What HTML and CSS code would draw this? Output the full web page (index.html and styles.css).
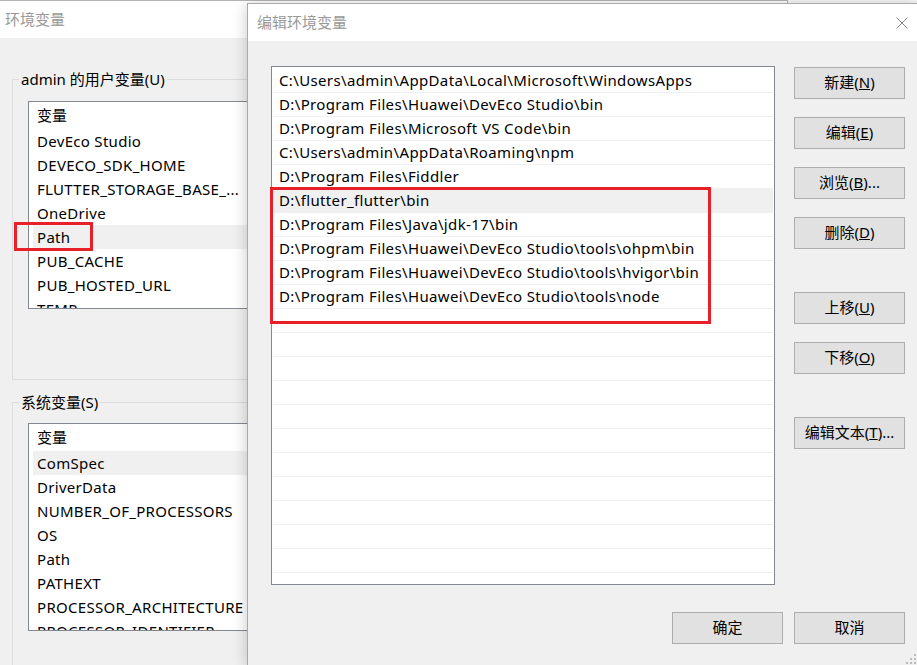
FILE: index.html
```html
<!DOCTYPE html>
<html lang="zh-CN">
<head>
    <meta charset="UTF-8">
    <title>编辑环境变量</title>
    <link rel="stylesheet" href="styles.css">
</head>
<body>

<div class="env-window">
    <div class="titlebar env-title">环境变量</div>
    <div class="env-body">
        <fieldset class="group user-group">
            <legend>admin 的用户变量(U)</legend>
            <div class="var-list">
                <div class="var-head">变量</div>
                <div class="var-row">DevEco Studio</div>
                <div class="var-row">DEVECO_SDK_HOME</div>
                <div class="var-row">FLUTTER_STORAGE_BASE_...</div>
                <div class="var-row">OneDrive</div>
                <div class="var-row sel">Path</div>
                <div class="var-row">PUB_CACHE</div>
                <div class="var-row">PUB_HOSTED_URL</div>
                <div class="var-row">TEMP</div>
            </div>
        </fieldset>
        <fieldset class="group sys-group">
            <legend>系统变量(S)</legend>
            <div class="var-list">
                <div class="var-head">变量</div>
                <div class="var-row sel">ComSpec</div>
                <div class="var-row">DriverData</div>
                <div class="var-row">NUMBER_OF_PROCESSORS</div>
                <div class="var-row">OS</div>
                <div class="var-row">Path</div>
                <div class="var-row">PATHEXT</div>
                <div class="var-row">PROCESSOR_ARCHITECTURE</div>
                <div class="var-row">PROCESSOR_IDENTIFIER</div>
            </div>
        </fieldset>
    </div>
</div>

<div class="mark mark-path"></div>

<div class="edit-dialog">
    <div class="titlebar dlg-title">
        <span>编辑环境变量</span>
        <svg class="close-x" width="12" height="12" viewBox="0 0 12 12">
            <path d="M0.5 0.5 L11.5 11.5 M11.5 0.5 L0.5 11.5" stroke="#888" stroke-width="1" fill="none"/>
        </svg>
    </div>
    <div class="dlg-body">
        <div class="dlg-main">
            <div class="path-list">
                <div class="path-row">C:\Users\admin\AppData\Local\Microsoft\WindowsApps</div>
                <div class="path-row">D:\Program Files\Huawei\DevEco Studio\bin</div>
                <div class="path-row">D:\Program Files\Microsoft VS Code\bin</div>
                <div class="path-row">C:\Users\admin\AppData\Roaming\npm</div>
                <div class="path-row">D:\Program Files\Fiddler</div>
                <div class="path-row sel">D:\flutter_flutter\bin</div>
                <div class="path-row">D:\Program Files\Java\jdk-17\bin</div>
                <div class="path-row">D:\Program Files\Huawei\DevEco Studio\tools\ohpm\bin</div>
                <div class="path-row">D:\Program Files\Huawei\DevEco Studio\tools\hvigor\bin</div>
                <div class="path-row">D:\Program Files\Huawei\DevEco Studio\tools\node</div>
                <div class="path-row"></div>
                <div class="path-row"></div>
                <div class="path-row"></div>
                <div class="path-row"></div>
                <div class="path-row"></div>
                <div class="path-row"></div>
                <div class="path-row"></div>
                <div class="path-row"></div>
                <div class="path-row"></div>
                <div class="path-row"></div>
                <div class="path-row"></div>
                <div class="path-row"></div>
            </div>
            <div class="side-buttons">
                <button class="btn">新建(<u>N</u>)</button>
                <button class="btn">编辑(<u>E</u>)</button>
                <button class="btn">浏览(<u>B</u>)...</button>
                <button class="btn">删除(<u>D</u>)</button>
                <button class="btn btn-sep">上移(<u>U</u>)</button>
                <button class="btn">下移(<u>O</u>)</button>
                <button class="btn btn-sep">编辑文本(<u>T</u>)...</button>
            </div>
        </div>
        <div class="dlg-footer">
            <button class="btn">确定</button>
            <button class="btn">取消</button>
        </div>
    </div>
    <div class="mark mark-paths"></div>
    <svg class="grip" width="10" height="10" viewBox="0 0 10 10">
        <rect x="8" y="0" width="2" height="2" fill="#bcbcbc"/>
        <rect x="4" y="4" width="2" height="2" fill="#bcbcbc"/>
        <rect x="8" y="4" width="2" height="2" fill="#bcbcbc"/>
        <rect x="0" y="8" width="2" height="2" fill="#bcbcbc"/>
        <rect x="4" y="8" width="2" height="2" fill="#bcbcbc"/>
        <rect x="8" y="8" width="2" height="2" fill="#bcbcbc"/>
    </svg>
</div>

</body>
</html>
```

FILE: styles.css
```css
body {
    margin: 0;
    width: 917px;
    height: 665px;
    overflow: hidden;
    position: relative;
    background-color: #f7f7f7;
    font-family: "Noto Sans", "Noto Sans CJK SC", sans-serif;
    font-size: 15px;
    color: #000;
}

/* background window */
.env-window {
    position: absolute;
    left: 0;
    top: 0;
    width: 788px;
    height: 665px;
    box-sizing: border-box;
    border-top: 1px solid #b4b4b4;
    border-right: 1px solid #b4b4b4;
    background-color: #f0f0f0;
    overflow: hidden;
}
.titlebar {
    background-color: #fff;
    color: #999;
    height: 37px;
    line-height: 37px;
}
.env-title {
    padding-left: 5px;
}
.env-body {
    padding: 0 12px;
}
.group {
    margin: 0;
    border: 1px solid #dcdcdc;
    padding: 12px 15px 70px;
    min-width: 0;
}
.group legend {
    margin-left: -9px;
    padding: 0 2px;
    line-height: 20px;
}
.user-group {
    margin-top: 31px;
}
.sys-group {
    margin-top: 12px;
    padding-top: 11px;
}
.var-list {
    height: 208px;
    box-sizing: border-box;
    border: 1px solid #828790;
    background-color: #fff;
    padding-left: 4px;
    overflow: hidden;
}
.var-head {
    height: 27px;
    line-height: 27px;
    padding-left: 4px;
}
.var-row {
    height: 24px;
    line-height: 24px;
    padding-left: 4px;
    white-space: nowrap;
    letter-spacing: 0.3px;
}
.var-row.sel {
    background-color: #f0f0f0;
}

/* red marks */
.mark {
    position: absolute;
    border: 3px solid #e8202a;
    box-sizing: border-box;
}
.mark-path {
    left: 14px;
    top: 222px;
    width: 79px;
    height: 29px;
}
.mark-paths {
    left: 22px;
    top: 183px;
    width: 441px;
    height: 137px;
}

/* edit dialog */
.edit-dialog {
    position: absolute;
    left: 247px;
    top: 3px;
    width: 671px;
    height: 662px;
    box-sizing: border-box;
    border: 1px solid #aaa;
    border-bottom: none;
    background-color: #f0f0f0;
    box-shadow: 0 2px 14px rgba(0, 0, 0, 0.22);
}
.dlg-title {
    display: flex;
    justify-content: space-between;
    align-items: center;
    padding: 0 9px;
}
.dlg-body {
    padding: 25px 0 0 23px;
}
.dlg-main {
    display: flex;
    align-items: flex-start;
}
.path-list {
    width: 504px;
    height: 519px;
    box-sizing: border-box;
    border: 1px solid #828790;
    background-color: #fff;
    padding: 2px 1px 0;
    overflow: hidden;
}
.path-row {
    height: 24px;
    box-sizing: border-box;
    line-height: 23px;
    padding-left: 6px;
    border-bottom: 1px solid #f0f0f0;
    white-space: nowrap;
    letter-spacing: 0.36px;
}
.path-row.sel {
    background-color: #f0f0f0;
}
.side-buttons {
    display: flex;
    flex-direction: column;
    gap: 18px;
    margin-left: 19px;
    margin-top: 1px;
}
.btn {
    width: 111px;
    height: 32px;
    border: 1px solid #adadad;
    background-color: #e1e1e1;
    font-family: inherit;
    font-size: 15px;
    color: #000;
    padding: 0 0 3px;
}
.btn-sep {
    margin-top: 25px;
}
.dlg-footer {
    width: 634px;
    display: flex;
    justify-content: flex-end;
    gap: 11px;
    margin-top: 27px;
}
.grip {
    position: absolute;
    right: 1px;
    bottom: 1px;
}
```
